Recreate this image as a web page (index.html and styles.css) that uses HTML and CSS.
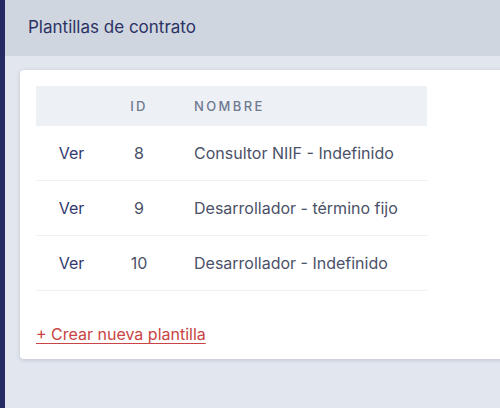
FILE: index.html
```html
<!DOCTYPE html>
<html lang="es">
<head>
<meta charset="utf-8">
<title>Plantillas de contrato</title>
<link rel="stylesheet" href="styles.css">
</head>
<body>
<div class="layout">
  <aside class="sidebar"></aside>
  <div class="main">
    <header class="topbar">
      <h1 class="title">Plantillas de contrato</h1>
    </header>
    <section class="content">
      <div class="card">
        <table class="table">
          <thead>
            <tr>
              <th class="col-action"></th>
              <th class="col-id">ID</th>
              <th class="col-name">Nombre</th>
            </tr>
          </thead>
          <tbody>
            <tr>
              <td class="col-action"><a href="#" class="view">Ver</a></td>
              <td class="col-id">8</td>
              <td class="col-name">Consultor NIIF - Indefinido</td>
            </tr>
            <tr>
              <td class="col-action"><a href="#" class="view">Ver</a></td>
              <td class="col-id">9</td>
              <td class="col-name">Desarrollador - término fijo</td>
            </tr>
            <tr>
              <td class="col-action"><a href="#" class="view">Ver</a></td>
              <td class="col-id">10</td>
              <td class="col-name">Desarrollador - Indefinido</td>
            </tr>
          </tbody>
        </table>
        <a href="#" class="create">+ Crear nueva plantilla</a>
      </div>
    </section>
  </div>
</div>
</body>
</html>
```
FILE: styles.css
```css
html, body {
  margin: 0;
  padding: 0;
}
body {
  font-family: Inter, "Noto Sans", "Liberation Sans", sans-serif;
  background: #e2e6ee;
  width: 500px;
  height: 408px;
  overflow: hidden;
}
.layout {
  display: flex;
  min-height: 408px;
}
.sidebar {
  width: 5px;
  flex: none;
  background: #252a62;
}
.main {
  flex: 1;
  min-width: 0;
  overflow: hidden;
}
.topbar {
  height: 56px;
  background: #cfd6df;
  display: flex;
  align-items: center;
  padding-left: 23px;
}
.title {
  margin: 0;
  font-size: 17px;
  font-weight: 400;
  color: #2b3264;
  line-height: 20px;
  padding-bottom: 2px;
}
.content {
  padding: 14px 0 0 15px;
}
.card {
  width: 520px;
  background: #fff;
  border-radius: 4px;
  box-shadow: 0 1px 4px rgba(40, 50, 80, 0.18);
  padding: 16px;
  box-sizing: border-box;
  height: 289px;
}
.table {
  width: 391px;
  table-layout: fixed;
  border-collapse: collapse;
  font-size: 16px;
}
.table th {
  background: #edf0f5;
  height: 40px;
  padding: 0;
  font-size: 13px;
  font-weight: 500;
  letter-spacing: 2.4px;
  text-transform: uppercase;
  color: #6f7990;
}
.table td {
  height: 54px;
  padding: 0;
  border-bottom: 1px solid #edf0f5;
  color: #4a5168;
}
.col-action {
  width: 71px;
  text-align: center;
}
.col-id {
  width: 64px;
  text-align: center;
}
.col-name {
  text-align: left;
  padding-left: 23px !important;
}
.view {
  color: #323a6e;
  text-decoration: none;
}
.create {
  display: inline-block;
  margin-top: 33px;
  font-size: 16px;
  line-height: 20px;
  color: #c94444;
  text-decoration: underline;
  text-decoration-thickness: 1px;
  text-underline-offset: 3px;
}
```
